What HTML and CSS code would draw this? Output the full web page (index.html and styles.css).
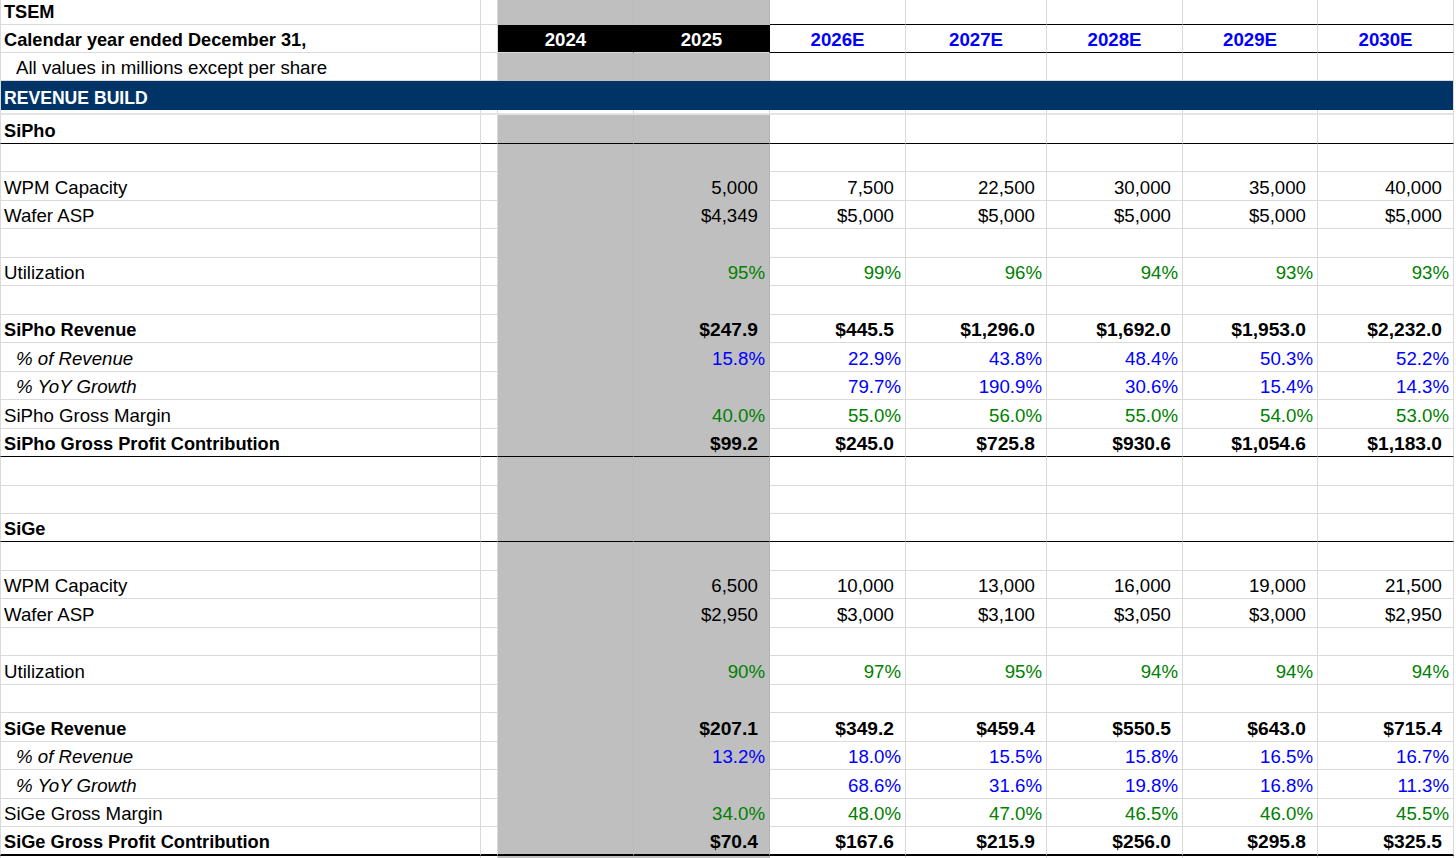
FILE: index.html
```html
<!DOCTYPE html>
<html>
<head>
<meta charset="utf-8">
<title>TSEM Revenue Build</title>
<link rel="stylesheet" href="styles.css">
</head>
<body>
<div class="sheet">
  <div class="row h25">
    <div class="c b">TSEM</div><div class="c"></div><div class="c g gc"></div><div class="c g gd"></div>
    <div class="c kb"></div><div class="c kb"></div><div class="c kb"></div><div class="c kb"></div><div class="c kb"></div>
  </div>
  <div class="row h28">
    <div class="c b">Calendar year ended December 31,</div><div class="c"></div>
    <div class="c blk">2024</div><div class="c blk">2025</div>
    <div class="c yr kb">2026E</div><div class="c yr kb">2027E</div><div class="c yr kb">2028E</div><div class="c yr kb">2029E</div><div class="c yr kb">2030E</div>
  </div>
  <div class="row h28">
    <div class="c ind">All values in millions except per share</div><div class="c"></div><div class="c g gc"></div><div class="c g gd"></div>
    <div class="c"></div><div class="c"></div><div class="c"></div><div class="c"></div><div class="c"></div>
  </div>
  <div class="row h29 navy">
    <div class="c band">REVENUE BUILD</div>
  </div>
  <div class="row spacer">
    <div class="c"></div><div class="c"></div><div class="c"></div><div class="c"></div>
    <div class="c"></div><div class="c"></div><div class="c"></div><div class="c"></div><div class="c"></div>
  </div>

  <!-- SiPho -->
  <div class="row h29 bb">
    <div class="c b">SiPho</div><div class="c"></div><div class="c g gc"></div><div class="c g gd"></div>
    <div class="c"></div><div class="c"></div><div class="c"></div><div class="c"></div><div class="c"></div>
  </div>
  <div class="row h28">
    <div class="c"></div><div class="c"></div><div class="c g gc"></div><div class="c g gd"></div>
    <div class="c"></div><div class="c"></div><div class="c"></div><div class="c"></div><div class="c"></div>
  </div>
  <div class="row h29">
    <div class="c">WPM Capacity</div><div class="c"></div><div class="c g gc"></div><div class="c g gd n">5,000</div>
    <div class="c n">7,500</div><div class="c n">22,500</div><div class="c n">30,000</div><div class="c n">35,000</div><div class="c n">40,000</div>
  </div>
  <div class="row h28">
    <div class="c">Wafer ASP</div><div class="c"></div><div class="c g gc"></div><div class="c g gd n">$4,349</div>
    <div class="c n">$5,000</div><div class="c n">$5,000</div><div class="c n">$5,000</div><div class="c n">$5,000</div><div class="c n">$5,000</div>
  </div>
  <div class="row h29">
    <div class="c"></div><div class="c"></div><div class="c g gc"></div><div class="c g gd"></div>
    <div class="c"></div><div class="c"></div><div class="c"></div><div class="c"></div><div class="c"></div>
  </div>
  <div class="row h28">
    <div class="c">Utilization</div><div class="c"></div><div class="c g gc"></div><div class="c g gd p gr">95%</div>
    <div class="c p gr">99%</div><div class="c p gr">96%</div><div class="c p gr">94%</div><div class="c p gr">93%</div><div class="c p gr">93%</div>
  </div>
  <div class="row h29">
    <div class="c"></div><div class="c"></div><div class="c g gc"></div><div class="c g gd"></div>
    <div class="c"></div><div class="c"></div><div class="c"></div><div class="c"></div><div class="c"></div>
  </div>
  <div class="row h28">
    <div class="c b">SiPho Revenue</div><div class="c"></div><div class="c g gc"></div><div class="c g gd n nb">$247.9</div>
    <div class="c n nb">$445.5</div><div class="c n nb">$1,296.0</div><div class="c n nb">$1,692.0</div><div class="c n nb">$1,953.0</div><div class="c n nb">$2,232.0</div>
  </div>
  <div class="row h29">
    <div class="c ind it">% of Revenue</div><div class="c"></div><div class="c g gc"></div><div class="c g gd p bl">15.8%</div>
    <div class="c p bl">22.9%</div><div class="c p bl">43.8%</div><div class="c p bl">48.4%</div><div class="c p bl">50.3%</div><div class="c p bl">52.2%</div>
  </div>
  <div class="row h28">
    <div class="c ind it">% YoY Growth</div><div class="c"></div><div class="c g gc"></div><div class="c g gd p bl"></div>
    <div class="c p bl">79.7%</div><div class="c p bl">190.9%</div><div class="c p bl">30.6%</div><div class="c p bl">15.4%</div><div class="c p bl">14.3%</div>
  </div>
  <div class="row h29">
    <div class="c">SiPho Gross Margin</div><div class="c"></div><div class="c g gc"></div><div class="c g gd p gr">40.0%</div>
    <div class="c p gr">55.0%</div><div class="c p gr">56.0%</div><div class="c p gr">55.0%</div><div class="c p gr">54.0%</div><div class="c p gr">53.0%</div>
  </div>
  <div class="row h28 bb">
    <div class="c b">SiPho Gross Profit Contribution</div><div class="c"></div><div class="c g gc"></div><div class="c g gd n nb">$99.2</div>
    <div class="c n nb">$245.0</div><div class="c n nb">$725.8</div><div class="c n nb">$930.6</div><div class="c n nb">$1,054.6</div><div class="c n nb">$1,183.0</div>
  </div>

  <div class="row h29">
    <div class="c"></div><div class="c"></div><div class="c g gc"></div><div class="c g gd"></div>
    <div class="c"></div><div class="c"></div><div class="c"></div><div class="c"></div><div class="c"></div>
  </div>
  <div class="row h28">
    <div class="c"></div><div class="c"></div><div class="c g gc"></div><div class="c g gd"></div>
    <div class="c"></div><div class="c"></div><div class="c"></div><div class="c"></div><div class="c"></div>
  </div>

  <!-- SiGe -->
  <div class="row h28 bb">
    <div class="c b">SiGe</div><div class="c"></div><div class="c g gc"></div><div class="c g gd"></div>
    <div class="c"></div><div class="c"></div><div class="c"></div><div class="c"></div><div class="c"></div>
  </div>
  <div class="row h29">
    <div class="c"></div><div class="c"></div><div class="c g gc"></div><div class="c g gd"></div>
    <div class="c"></div><div class="c"></div><div class="c"></div><div class="c"></div><div class="c"></div>
  </div>
  <div class="row h28">
    <div class="c">WPM Capacity</div><div class="c"></div><div class="c g gc"></div><div class="c g gd n">6,500</div>
    <div class="c n">10,000</div><div class="c n">13,000</div><div class="c n">16,000</div><div class="c n">19,000</div><div class="c n">21,500</div>
  </div>
  <div class="row h29">
    <div class="c">Wafer ASP</div><div class="c"></div><div class="c g gc"></div><div class="c g gd n">$2,950</div>
    <div class="c n">$3,000</div><div class="c n">$3,100</div><div class="c n">$3,050</div><div class="c n">$3,000</div><div class="c n">$2,950</div>
  </div>
  <div class="row h28">
    <div class="c"></div><div class="c"></div><div class="c g gc"></div><div class="c g gd"></div>
    <div class="c"></div><div class="c"></div><div class="c"></div><div class="c"></div><div class="c"></div>
  </div>
  <div class="row h29">
    <div class="c">Utilization</div><div class="c"></div><div class="c g gc"></div><div class="c g gd p gr">90%</div>
    <div class="c p gr">97%</div><div class="c p gr">95%</div><div class="c p gr">94%</div><div class="c p gr">94%</div><div class="c p gr">94%</div>
  </div>
  <div class="row h28">
    <div class="c"></div><div class="c"></div><div class="c g gc"></div><div class="c g gd"></div>
    <div class="c"></div><div class="c"></div><div class="c"></div><div class="c"></div><div class="c"></div>
  </div>
  <div class="row h29">
    <div class="c b">SiGe Revenue</div><div class="c"></div><div class="c g gc"></div><div class="c g gd n nb">$207.1</div>
    <div class="c n nb">$349.2</div><div class="c n nb">$459.4</div><div class="c n nb">$550.5</div><div class="c n nb">$643.0</div><div class="c n nb">$715.4</div>
  </div>
  <div class="row h28">
    <div class="c ind it">% of Revenue</div><div class="c"></div><div class="c g gc"></div><div class="c g gd p bl">13.2%</div>
    <div class="c p bl">18.0%</div><div class="c p bl">15.5%</div><div class="c p bl">15.8%</div><div class="c p bl">16.5%</div><div class="c p bl">16.7%</div>
  </div>
  <div class="row h29">
    <div class="c ind it">% YoY Growth</div><div class="c"></div><div class="c g gc"></div><div class="c g gd p bl"></div>
    <div class="c p bl">68.6%</div><div class="c p bl">31.6%</div><div class="c p bl">19.8%</div><div class="c p bl">16.8%</div><div class="c p bl">11.3%</div>
  </div>
  <div class="row h28">
    <div class="c">SiGe Gross Margin</div><div class="c"></div><div class="c g gc"></div><div class="c g gd p gr">34.0%</div>
    <div class="c p gr">48.0%</div><div class="c p gr">47.0%</div><div class="c p gr">46.5%</div><div class="c p gr">46.0%</div><div class="c p gr">45.5%</div>
  </div>
  <div class="row h29 bb2">
    <div class="c b">SiGe Gross Profit Contribution</div><div class="c"></div><div class="c g gc"></div><div class="c g gd n nb">$70.4</div>
    <div class="c n nb">$167.6</div><div class="c n nb">$215.9</div><div class="c n nb">$256.0</div><div class="c n nb">$295.8</div><div class="c n nb">$325.5</div>
  </div>
  <div class="row h28">
    <div class="c"></div><div class="c"></div><div class="c g gc"></div><div class="c g gd"></div>
    <div class="c"></div><div class="c"></div><div class="c"></div><div class="c"></div><div class="c"></div>
  </div>
</div>
</body>
</html>
```
FILE: styles.css
```css
html, body {
  margin: 0;
  padding: 0;
  background: #ffffff;
  height: 858px;
  overflow: hidden;
}

body {
  font-family: "Liberation Sans", Arial, sans-serif;
  font-size: 18.67px;
  color: #000000;
}

.sheet {
  width: 1454px;
}

.row {
  display: grid;
  grid-template-columns: 481px 17px 136px 136px 136px 141px 136px 135px 136px;
}

.h25 { height: 25px; }
.h28 { height: 28px; }
.h29 { height: 29px; }
.spacer { height: 5px; }

.c {
  box-sizing: border-box;
  border-right: 1px solid #dadada;
  border-bottom: 1px solid #dadada;
  display: flex;
  align-items: flex-end;
  padding: 0 4px 2px 4px;
  line-height: 20px;
  white-space: nowrap;
  overflow: hidden;
  min-width: 0;
}

.row > .c:first-child {
  border-left: 1px solid #dadada;
  padding-left: 3px;
}

.row > .c.ind:first-child {
  padding-left: 15px;
}

.spacer .c {
  border-bottom: 2px solid #e4e4e4;
  padding: 0;
}

.b {
  font-weight: bold;
  font-size: 18.2px;
}
.it { font-style: italic; }
.ind { padding-left: 15px; }

.n {
  justify-content: flex-end;
  padding-right: 11px;
}
.nb {
  font-weight: bold;
  font-size: 19.2px;
}

.p {
  justify-content: flex-end;
  padding-right: 4px;
}

.gr { color: #008000; }
.bl { color: #0000ff; }

.g {
  background: #bfbfbf;
  border-bottom-color: #bfbfbf;
}
.gc { border-right-color: #bababa; }
.gd { border-right-color: #b3b3b3; }

.blk {
  background: #000000;
  color: #ffffff;
  font-weight: bold;
  justify-content: center;
  border-right-color: #000000;
}

.yr {
  color: #0000ff;
  font-weight: bold;
  justify-content: center;
}

.kb { border-bottom-color: #000000; }

.navy .band {
  grid-column: 1 / -1;
  background: #003366;
  color: #ffffff;
  font-weight: bold;
  font-size: 17.6px;
  border-bottom: 0;
  border-right: 1px solid #dadada;
  border-left: 0;
  padding-left: 4px;
}

.bb > .c { border-bottom-color: #000000; }
.bb2 > .c { border-bottom: 2px solid #000000; }
```
